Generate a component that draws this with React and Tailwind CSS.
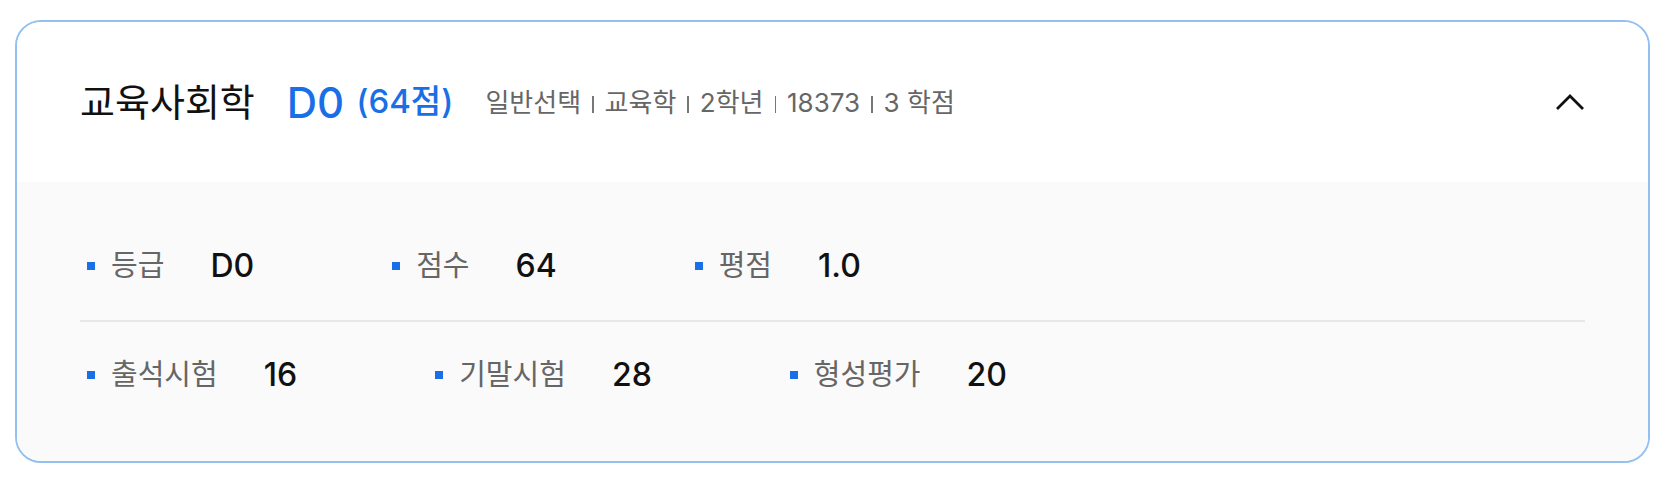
import React from 'react';

const FONT = { fontFamily: 'Inter, "Noto Sans CJK KR", sans-serif' };

const meta = ['일반선택', '교육학', '2학년', '18373', '3 학점'];

const rows = [
  [
    { label: '등급', value: 'D0' },
    { label: '점수', value: '64' },
    { label: '평점', value: '1.0' },
  ],
  [
    { label: '출석시험', value: '16' },
    { label: '기말시험', value: '28' },
    { label: '형성평가', value: '20' },
  ],
];

function Item({ label, value }) {
  return (
    <div className="flex items-center">
      <span className="w-[8px] h-[8px] bg-[#1a6fe6] mr-[16px]" />
      <span className="text-[29px] text-[#666] mr-[46px]">{label}</span>
      <span className="text-[32px] font-medium text-[#111]">{value}</span>
    </div>
  );
}

export default function App() {
  return (
    <div className="bg-white w-[1672px] h-[479px] pt-[20px] pl-[15px]" style={FONT}>
      <div className="w-[1635px] h-[443px] border-2 border-[#93c0f0] rounded-[26px] overflow-hidden flex flex-col">
        <div className="h-[160px] bg-white flex items-center justify-between px-[63px]">
          <div className="flex items-center">
            <span className="text-[38px] text-[#111]">교육사회학</span>
            <span className="ml-[32px] text-[42px] font-medium text-[#1a6fe6]">D0</span>
            <span className="ml-[12px] text-[33px] font-medium text-[#1a6fe6]">(64점)</span>
            <div className="ml-[32px] flex items-center text-[26px] text-[#666]">
              {meta.map((m, i) => (
                <React.Fragment key={m}>
                  {i > 0 && <span className="inline-block w-[1.5px] h-[17px] bg-[#777] mx-[11px] mt-[4px]" />}
                  <span>{m}</span>
                </React.Fragment>
              ))}
            </div>
          </div>
          <svg width="30" height="18" viewBox="0 0 30 18" fill="none">
            <polyline points="2,16 15,3 28,16" stroke="#111" strokeWidth="2.8" />
          </svg>
        </div>
        <div className="flex-1 bg-[#fafafa] px-[63px] pt-[50px]">
          <div className="h-[68px] flex items-center gap-[138px] pl-[7px]">
            {rows[0].map((it) => <Item key={it.label} {...it} />)}
          </div>
          <div className="h-[2px] bg-[#e8e8e8] mt-[20px]" />
          <div className="h-[68px] flex items-center gap-[138px] pl-[7px] mt-[19px]">
            {rows[1].map((it) => <Item key={it.label} {...it} />)}
          </div>
        </div>
      </div>
    </div>
  );
}
